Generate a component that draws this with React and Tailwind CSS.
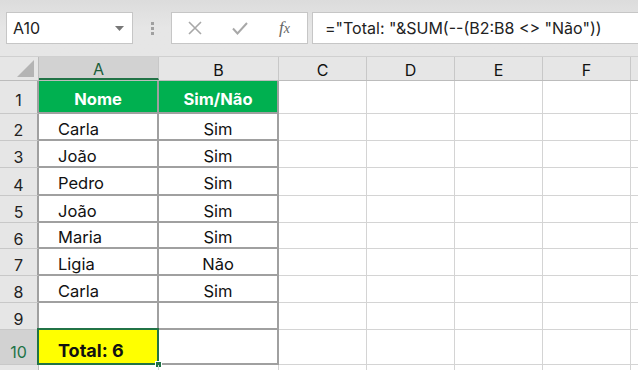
import React from 'react';

const font = { fontFamily: 'Inter, "Liberation Sans", Arial, sans-serif' };

const cols = ['A', 'B', 'C', 'D', 'E', 'F', ''];
const colW = ['w-[120px]', 'w-[120px]', 'w-[88px]', 'w-[88px]', 'w-[88px]', 'w-[88px]', 'w-[88px]'];

const rows = [
  { n: 1, h: 'h-[33px]', a: 'Nome', b: 'Sim/Não', head: true },
  { n: 2, h: 'h-[27px]', a: 'Carla', b: 'Sim' },
  { n: 3, h: 'h-[27px]', a: 'João', b: 'Sim' },
  { n: 4, h: 'h-[28px]', a: 'Pedro', b: 'Sim' },
  { n: 5, h: 'h-[27px]', a: 'João', b: 'Sim' },
  { n: 6, h: 'h-[26px]', a: 'Maria', b: 'Sim' },
  { n: 7, h: 'h-[27px]', a: 'Ligia', b: 'Não' },
  { n: 8, h: 'h-[27px]', a: 'Carla', b: 'Sim' },
  { n: 9, h: 'h-[27px]', a: '', b: '' },
  { n: 10, h: 'h-[35px]', a: 'Total: 6', b: '', total: true },
  { n: 11, h: 'h-[27px]', a: null, b: null, blank: true },
];

const Toolbar = () => (
  <div className="h-[57px] bg-gradient-to-b from-[#dcdcdc] via-[#e6e6e6] to-[#e6e6e6] flex items-start pt-[12px] pl-[6px] border-b border-[#d0d0d0]">
    {/* name box */}
    <div className="w-[127px] h-[32px] bg-white border border-[#c6c6c6] flex items-center pl-[6px] pr-[8px] justify-between">
      <span className="text-[16px] text-[#222]">A10</span>
      <svg width="9" height="5" viewBox="0 0 9 5"><path d="M0 0h9L4.5 5z" fill="#777" /></svg>
    </div>
    {/* divider dots */}
    <div className="w-[38px] h-[32px] flex flex-col items-center justify-center gap-[2px]">
      <div className="w-[3px] h-[3px] bg-[#a0a0a0]" />
      <div className="w-[3px] h-[3px] bg-[#a0a0a0]" />
      <div className="w-[3px] h-[3px] bg-[#a0a0a0]" />
    </div>
    {/* buttons */}
    <div className="w-[137px] h-[32px] bg-white border border-[#c6c6c6] flex items-center">
      <div className="w-[45px] flex justify-center">
        <svg width="14" height="14" viewBox="0 0 14 14"><path d="M1 1l12 12M13 1L1 13" stroke="#a8a8a8" strokeWidth="1.6" /></svg>
      </div>
      <div className="w-[45px] flex justify-center">
        <svg width="16" height="13" viewBox="0 0 16 13"><path d="M1 6.5l4.5 5L15 1" stroke="#a8a8a8" strokeWidth="2" fill="none" /></svg>
      </div>
      <div className="w-[45px] flex justify-center">
        <span className="text-[17px] italic text-[#666]" style={{ fontFamily: '"Liberation Serif", serif' }}>
          f<span className="text-[14px]">x</span>
        </span>
      </div>
    </div>
    <div className="w-[4px]" />
    {/* formula box */}
    <div className="flex-1 h-[32px] bg-white border border-[#c6c6c6] border-r-0 flex items-center pl-[12px]">
      <span className="text-[16px] text-[#222] whitespace-nowrap">="Total: "&SUM(--(B2:B8 &lt;&gt; "Não"))</span>
    </div>
  </div>
);

const ColumnHeader = () => (
  <div className="flex h-[24px] bg-[#e6e6e6] border-b border-[#bcbcbc]">
    <div className="w-[39px] shrink-0 relative border-r border-[#bcbcbc]">
      <svg className="absolute right-[4px] bottom-[3px]" width="17" height="17" viewBox="0 0 17 17"><path d="M17 0V17H0z" fill="#b4b4b4" /></svg>
    </div>
    {cols.map((c, i) => (
      <div
        key={i}
        className={`${colW[i]} shrink-0 flex items-center justify-center text-[16px] pt-[2px] border-r border-[#c8c8c8] ${
          c === 'A' ? 'bg-[#d2d2d2] text-[#1a5e3a] border-b-2 border-b-[#217346]' : 'text-[#111]'
        }`}
      >
        {c}
      </div>
    ))}
  </div>
);

const Row = ({ r }) => {
  const inTable = r.a !== null;
  const tableCell = 'border-r-2 border-b-2 border-[#a0a0a0]';
  return (
    <div className={`flex ${r.h}`}>
      <div
        className={`w-[39px] shrink-0 flex items-center justify-center text-[16px] border-b border-[#c8c8c8] ${
          r.total
            ? 'bg-[#d2d2d2] text-[#217346] border-r-2 border-r-[#217346] pt-[9px]'
            : `bg-[#e6e6e6] text-[#222] ${inTable ? 'border-r-2 border-r-[#a0a0a0]' : 'border-r border-r-[#bcbcbc]'} pt-[6px]`
        }`}
      >
        {r.blank ? '' : r.n}
      </div>
      {/* A */}
      <div
        className={`w-[120px] shrink-0 flex items-center relative ${
          inTable ? tableCell : 'border-r border-b border-[#d4d4d4]'
        } ${r.head ? 'bg-[#00b050] text-white font-bold justify-center pt-[6px] text-[16.5px]' : 'pl-[19px] pt-[5px] text-[#111] text-[16.5px]'} ${
          r.total ? 'bg-[#ffff00] font-bold !text-[18px] pt-[8px]' : ''
        }`}
      >
        {r.a}
        {r.total && (
          <>
            <div className="absolute -left-[2px] -top-[2px] -right-[2px] -bottom-[2px] border-2 border-[#217346]" />
            <div className="absolute -right-[5px] -bottom-[5px] w-[7px] h-[7px] bg-[#217346] border border-white" />
          </>
        )}
      </div>
      {/* B */}
      <div
        className={`w-[120px] shrink-0 flex items-center justify-center text-[16.5px] ${
          inTable ? tableCell : 'border-r border-b border-[#d4d4d4]'
        } ${r.head ? 'bg-[#00b050] text-white font-bold pt-[6px]' : 'pt-[5px] text-[#111]'}`}
      >
        {r.b}
      </div>
      {colW.slice(2).map((w, i) => (
        <div key={i} className={`${w} shrink-0 border-r border-b border-[#d4d4d4] bg-white`} />
      ))}
    </div>
  );
};

export default function App() {
  return (
    <div className="w-[638px] h-[370px] overflow-hidden bg-white" style={font}>
      <Toolbar />
      <ColumnHeader />
      {rows.map((r) => (
        <Row key={r.n} r={r} />
      ))}
    </div>
  );
}
